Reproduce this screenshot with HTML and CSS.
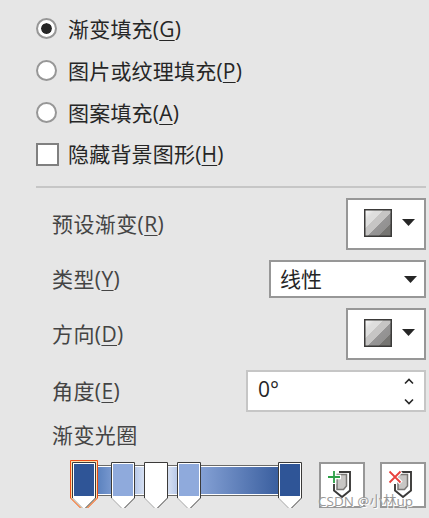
FILE: index.html
```html
<!DOCTYPE html>
<html lang="zh-CN">
<head>
    <meta charset="UTF-8">
    <title>设置背景格式</title>
    <link rel="stylesheet" href="styles.css">
</head>
<body>
    <div class="panel">
        <div class="options">
            <div class="option"><span class="radio checked"></span><span class="text">渐变填充(<u>G</u>)</span></div>
            <div class="option"><span class="radio"></span><span class="text">图片或纹理填充(<u>P</u>)</span></div>
            <div class="option"><span class="radio"></span><span class="text">图案填充(<u>A</u>)</span></div>
            <div class="option"><span class="checkbox"></span><span class="text">隐藏背景图形(<u>H</u>)</span></div>
        </div>

        <div class="fields">
            <div class="field">
                <span class="label">预设渐变(<u>R</u>)</span>
                <div class="box swatch-box">
                    <svg class="swatch" width="28" height="28" viewBox="0 0 28 28">
                        <defs>
                            <linearGradient id="shine" x1="0" y1="0" x2="1" y2="1">
                                <stop offset="0" stop-color="#fff"/>
                                <stop offset=".22" stop-color="#dededd"/>
                                <stop offset=".36" stop-color="#dededd"/>
                                <stop offset=".36" stop-color="#c6c5c4"/>
                                <stop offset=".54" stop-color="#c6c5c4"/>
                                <stop offset=".54" stop-color="#979696"/>
                                <stop offset=".76" stop-color="#929190"/>
                                <stop offset=".76" stop-color="#767572"/>
                                <stop offset="1" stop-color="#767572"/>
                            </linearGradient>
                        </defs>
                        <rect x=".75" y=".75" width="26.5" height="26.5" fill="url(#shine)" stroke="#3b3a39" stroke-width="1.5"/>
                    </svg>
                    <svg class="arrow" width="13" height="7" viewBox="0 0 13 7"><path d="M0 0h13L6.5 7z"/></svg>
                </div>
            </div>
            <div class="field">
                <span class="label">类型(<u>Y</u>)</span>
                <div class="box select">
                    <span class="value">线性</span>
                    <svg class="arrow" width="13" height="7" viewBox="0 0 13 7"><path d="M0 0h13L6.5 7z"/></svg>
                </div>
            </div>
            <div class="field">
                <span class="label">方向(<u>D</u>)</span>
                <div class="box swatch-box">
                    <svg class="swatch" width="28" height="28" viewBox="0 0 28 28">
                        <rect x=".75" y=".75" width="26.5" height="26.5" fill="url(#shine)" stroke="#3b3a39" stroke-width="1.5"/>
                    </svg>
                    <svg class="arrow" width="13" height="7" viewBox="0 0 13 7"><path d="M0 0h13L6.5 7z"/></svg>
                </div>
            </div>
            <div class="field">
                <span class="label">角度(<u>E</u>)</span>
                <div class="box spinner">
                    <span class="value">0°</span>
                    <svg class="spin" width="10" height="27" viewBox="0 0 10 27"><path d="M1 5.5l4-4 4 4M1 21.5l4 4 4-4"/></svg>
                </div>
            </div>
        </div>

        <div class="label stops-label">渐变光圈</div>
        <div class="stops">
            <svg class="slider" width="236" height="50" viewBox="68 460 236 50">
                <defs>
                    <linearGradient id="bar" gradientUnits="userSpaceOnUse" x1="84" y1="0" x2="290" y2="0">
                        <stop offset="0" stop-color="#3f6cae"/>
                        <stop offset=".19" stop-color="#8faadc"/>
                        <stop offset=".35" stop-color="#fff"/>
                        <stop offset=".51" stop-color="#8faadc"/>
                        <stop offset="1" stop-color="#2f5597"/>
                    </linearGradient>
                    <g id="marker">
                        <path d="M0 0h24v36L13.5 46h-3L0 36z" fill="#fff"/>
                        <path d="M.5 36V.5h23V36" fill="none" stroke="#3b3a39"/>
                        <path d="M.5 36l10 10" fill="none" stroke="#a5a5a5"/>
                        <path d="M23.5 36l-10 10" fill="none" stroke="#3b3a39"/>
                    </g>
                </defs>
                <path d="M84 465h206v31H84z" fill="#6a6a68"/>
                <path d="M84 466h206v29H84z" fill="#fff"/>
                <path d="M84 467h206v27H84z" fill="url(#bar)"/>
                <path d="M70 460h28v38L88 508h-8L70 498z" fill="#ffe1ae"/>
                <path d="M80.5 508l-10-10V460.5h27V498l-10 10" fill="none" stroke="#eb4b14"/>
                <use href="#marker" x="72" y="462"/>
                <path d="M74 464h20v32H74z" fill="#2f5597"/>
                <use href="#marker" x="111" y="462"/>
                <path d="M113 464h20v32h-20z" fill="#8faadc"/>
                <use href="#marker" x="144" y="462"/>
                <use href="#marker" x="177" y="462"/>
                <path d="M179 464h20v32h-20z" fill="#8faadc"/>
                <use href="#marker" x="278" y="462"/>
                <path d="M280 464h20v32h-20z" fill="#2f5597"/>
            </svg>
            <div class="box tool">
                <svg width="42" height="42" viewBox="0 0 42 42">
                    <path d="M16 10.500h9.500V22l-3 3.500H16z" fill="#c8c6c4" stroke="#797775" stroke-width="1.500"/>
                    <path d="M18 8h11v18.500L21 33l-8-6.500V20" fill="none" stroke="#3b3a39" stroke-width="1.900"/>
                    <path d="M13 6v14M6 13h14" stroke="#fff" stroke-width="4.500"/>
                    <path d="M13 7v12M7 13h12" stroke="#2d9f47" stroke-width="1.800"/>
                </svg>
            </div>
            <div class="box tool">
                <svg width="42" height="42" viewBox="0 0 42 42">
                    <path d="M16 10.500h9.500V22l-3 3.500H16z" fill="#c8c6c4" stroke="#797775" stroke-width="1.500"/>
                    <path d="M18 8h11v18.500L21 33l-8-6.500V20" fill="none" stroke="#3b3a39" stroke-width="1.900"/>
                    <path d="M7 7l12 12m0-12L7 19" stroke="#fff" stroke-width="4.500"/>
                    <path d="M7.500 7.500l11 11m0-11l-11 11" stroke="#e8403c" stroke-width="1.800"/>
                </svg>
            </div>
            <span class="watermark">CSDN @小林up</span>
        </div>
    </div>
</body>
</html>
```
FILE: styles.css
```css
* {
    box-sizing: border-box;
}
body {
    margin: 0;
    background-color: #e6e6e6;
    color: #262626;
    font-family: "Open Sans", "Noto Sans CJK SC", sans-serif;
    font-size: 21px;
    line-height: 24px;
    overflow: hidden;
}
svg {
    display: block;
}
u {
    text-decoration-thickness: 1px;
    text-underline-offset: 3px;
}
.panel {
    height: 518px;
    padding: 18px 3px 0 36px;
}
.options {
    height: 170px;
    border-bottom: 2px solid #c6c6c6;
}
.option {
    display: flex;
    align-items: flex-start;
    height: 42px;
}
.option .text {
    margin: -1px 0 0 11px;
    letter-spacing: .2px;
}
.radio {
    width: 21px;
    height: 21px;
    border: 2px solid #979797;
    border-radius: 50%;
    background-color: #fff;
}
.checked {
    padding: 3px;
    background: #262626 content-box;
    box-shadow: inset 0 0 0 3px #fff;
}
.checkbox {
    width: 23px;
    height: 23px;
    margin-top: -1px;
    border: 2px solid #808080;
    background-color: #fff;
}
.option .checkbox + .text {
    margin: -2px 0 0 9px;
}
.fields {
    display: flex;
    flex-direction: column;
    gap: 10px;
    margin-top: 10px;
    padding-left: 16px;
}
.field {
    display: flex;
    justify-content: space-between;
    align-items: center;
}
.label {
    color: #444;
    letter-spacing: .4px;
}
.box {
    display: flex;
    align-items: center;
    border: 2px solid #979797;
    background-color: #fff;
}
.swatch-box {
    width: 80px;
    height: 52px;
    padding-left: 16px;
}
.swatch {
    margin-top: -2px;
}
.arrow {
    margin: -3px 0 0 10px;
    fill: #262626;
}
.select {
    width: 157px;
    height: 38px;
    padding: 0 7px 0 9px;
    justify-content: space-between;
}
.select .arrow {
    margin-top: 1px;
}
.spinner {
    width: 180px;
    height: 42px;
    padding: 0 10px;
    justify-content: space-between;
    border-color: #c6c6c6;
}
.spinner .value {
    margin-top: -4px;
}
.spin {
    fill: none;
    stroke: #262626;
    stroke-width: 1.6;
}
.stops-label {
    margin: 11px 0 0 16px;
}
.stops {
    position: relative;
    display: flex;
    align-items: flex-start;
    margin: 13px 0 0 32px;
}
.tool {
    width: 46px;
    height: 46px;
    margin: 2px 0 0 15px;
}
.watermark {
    position: absolute;
    left: 250px;
    top: 31px;
    color: #999;
    font-size: 13.5px;
    line-height: 20px;
    white-space: nowrap;
    text-shadow: 1px 1px 0 #fff;
}
```
